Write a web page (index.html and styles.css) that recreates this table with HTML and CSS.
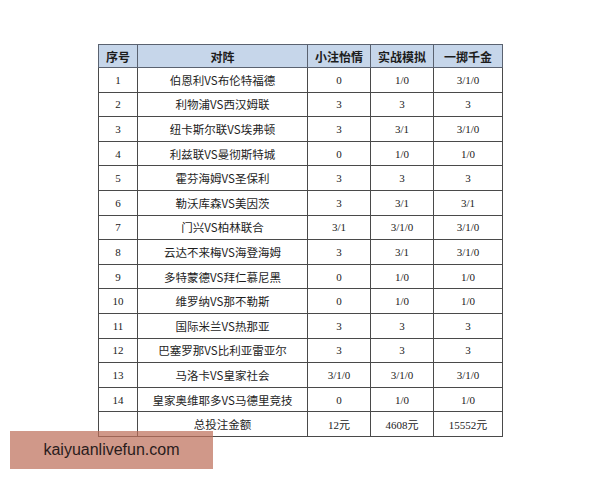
FILE: index.html
```html
<!DOCTYPE html>
<html>
<head>
<meta charset="utf-8">
<link rel="stylesheet" href="styles.css">
</head>
<body>
<div class="page">
  <table class="odds">
    <colgroup>
      <col class="c-no"><col class="c-match"><col class="c-a"><col class="c-b"><col class="c-c">
    </colgroup>
    <thead>
      <tr><th>序号</th><th>对阵</th><th>小注怡情</th><th>实战模拟</th><th>一掷千金</th></tr>
    </thead>
    <tbody>
      <tr><td>1</td><td>伯恩利VS布伦特福德</td><td>0</td><td>1/0</td><td>3/1/0</td></tr>
      <tr><td>2</td><td>利物浦VS西汉姆联</td><td>3</td><td>3</td><td>3</td></tr>
      <tr><td>3</td><td>纽卡斯尔联VS埃弗顿</td><td>3</td><td>3/1</td><td>3/1/0</td></tr>
      <tr><td>4</td><td>利兹联VS曼彻斯特城</td><td>0</td><td>1/0</td><td>1/0</td></tr>
      <tr><td>5</td><td>霍芬海姆VS圣保利</td><td>3</td><td>3</td><td>3</td></tr>
      <tr><td>6</td><td>勒沃库森VS美因茨</td><td>3</td><td>3/1</td><td>3/1</td></tr>
      <tr><td>7</td><td>门兴VS柏林联合</td><td>3/1</td><td>3/1/0</td><td>3/1/0</td></tr>
      <tr><td>8</td><td>云达不来梅VS海登海姆</td><td>3</td><td>3/1</td><td>3/1/0</td></tr>
      <tr><td>9</td><td>多特蒙德VS拜仁慕尼黑</td><td>0</td><td>1/0</td><td>1/0</td></tr>
      <tr><td>10</td><td>维罗纳VS那不勒斯</td><td>0</td><td>1/0</td><td>1/0</td></tr>
      <tr><td>11</td><td>国际米兰VS热那亚</td><td>3</td><td>3</td><td>3</td></tr>
      <tr><td>12</td><td>巴塞罗那VS比利亚雷亚尔</td><td>3</td><td>3</td><td>3</td></tr>
      <tr><td>13</td><td>马洛卡VS皇家社会</td><td>3/1/0</td><td>3/1/0</td><td>3/1/0</td></tr>
      <tr><td>14</td><td>皇家奥维耶多VS马德里竞技</td><td>0</td><td>1/0</td><td>1/0</td></tr>
      <tr><td></td><td>总投注金额</td><td>12元</td><td>4608元</td><td>15552元</td></tr>
    </tbody>
  </table>
  <div class="watermark">kaiyuanlivefun.com</div>
</div>
</body>
</html>
```

FILE: styles.css
```css
html, body {
  margin: 0;
  padding: 0;
  background: #ffffff;
}
.page {
  position: relative;
  width: 600px;
  height: 480px;
  padding: 44px 0 0 98px;
  box-sizing: border-box;
}
.odds {
  border-collapse: collapse;
  table-layout: fixed;
  width: 404px;
  border: 1px solid #3a3a3a;
  font-family: "Liberation Serif", "Noto Sans CJK SC", serif;
  font-size: 11px;
  color: #222;
}
.c-no { width: 39px; }
.c-match { width: 170px; }
.c-a { width: 63px; }
.c-b { width: 63px; }
.c-c { width: 69px; }
.odds th,
.odds td {
  border: 1px solid #4a4a4a;
  text-align: center;
  padding: 0;
  white-space: nowrap;
  overflow: hidden;
}
.odds th {
  height: 22px;
  background: #c6d6ea;
  font-family: "Noto Sans CJK SC", sans-serif;
  font-weight: bold;
  font-size: 12px;
  color: #1c1c1c;
  border-color: #5a6270;
}
.odds td {
  height: 23.6px;
}
.odds td:nth-child(2) {
  font-family: "Noto Sans CJK SC", sans-serif;
  font-size: 11.5px;
  color: #1e1e1e;
}
.watermark {
  position: absolute;
  left: 10px;
  top: 431px;
  width: 203px;
  height: 38px;
  background: rgba(190, 112, 92, 0.72);
  color: #2a1c1c;
  font-family: "Liberation Sans", Arial, sans-serif;
  font-size: 16px;
  line-height: 38px;
  text-align: center;
}
```
